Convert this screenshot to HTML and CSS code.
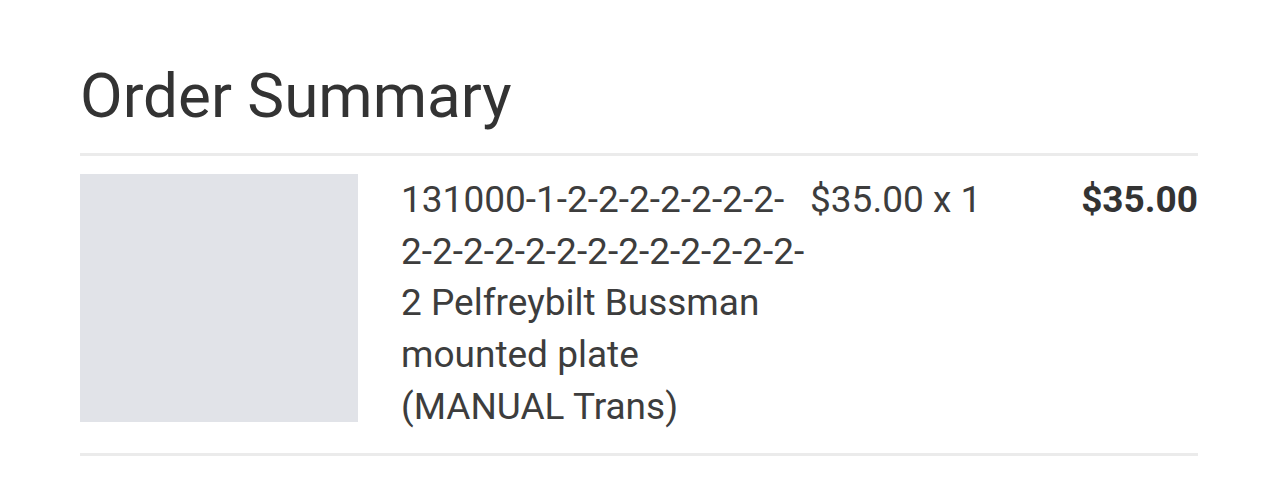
FILE: index.html
```html
<!DOCTYPE html>
<html>
<head>
<meta charset="utf-8">
<link rel="stylesheet" href="styles.css">
</head>
<body>
<section class="summary">
  <h1 class="summary-title">Order Summary</h1>
  <div class="item">
    <div class="item-thumb"></div>
    <div class="item-name">131000-1-2-2-2-2-2-2-2-2-2-2-2-2-2-2-2-2-2-2-2-2-2 Pelfreybilt Bussman mounted plate (MANUAL Trans)</div>
    <div class="item-price">$35.00 x 1</div>
    <div class="item-total">$35.00</div>
  </div>
</section>
</body>
</html>
```
FILE: styles.css
```css
html, body {
  margin: 0;
  padding: 0;
  background: #ffffff;
}
body {
  font-family: Roboto, "Liberation Sans", sans-serif;
  color: #3d3d3d;
}
.summary {
  width: 1118px;
  margin-left: 80px;
  padding-top: 60px;
}
.summary-title {
  margin: 0;
  font-size: 62px;
  line-height: 72px;
  font-weight: 400;
  color: #333333;
  padding-bottom: 21px;
  border-bottom: 3px solid #ebebeb;
}
.item {
  display: flex;
  align-items: flex-start;
  padding: 18px 0 20px;
  border-bottom: 3px solid #ebebeb;
  font-size: 37px;
  line-height: 51.7px;
}
.item-thumb {
  width: 278px;
  height: 248px;
  background: #e1e3e8;
  flex: none;
}
.item-name {
  width: 408px;
  margin-left: 43px;
  flex: none;
}
.item-price {
  flex: none;
  margin-left: 1px;
  white-space: nowrap;
}
.item-total {
  margin-left: auto;
  font-weight: 700;
  color: #333333;
}
```
